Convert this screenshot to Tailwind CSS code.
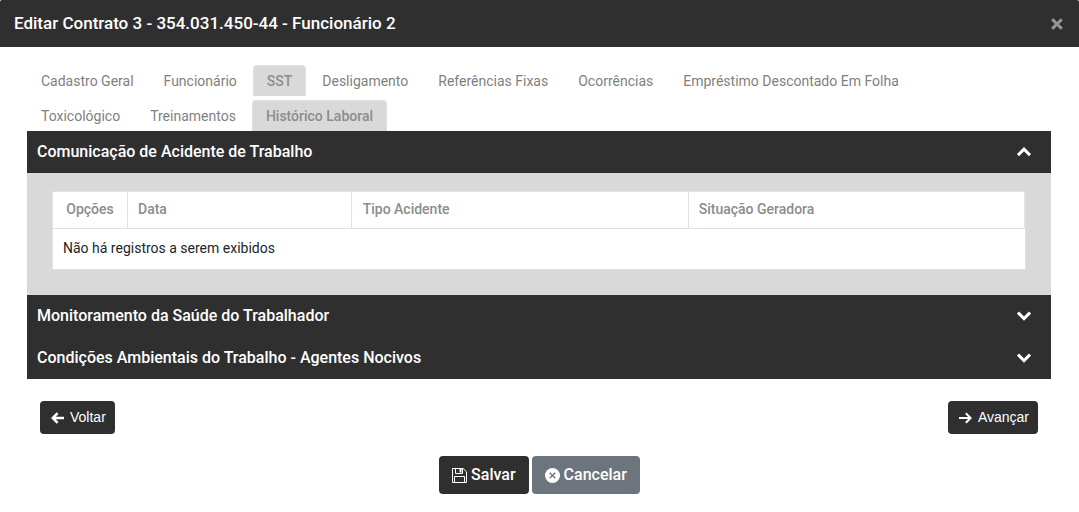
<!DOCTYPE html>
<html lang="pt-BR">
<head>
    <meta charset="UTF-8">
    <meta name="viewport" content="width=device-width, initial-scale=1.0">
    <title>Editar Contrato</title>
    <script src="https://cdn.jsdelivr.net/npm/@tailwindcss/browser@4"></script>
</head>
<body class="bg-white font-[Roboto,sans-serif] text-sm text-[#212529]">

    <!-- Modal header -->
    <header class="flex items-center justify-between rounded-t-[2px] bg-[#2f2f2f] px-[14px] h-[47px]">
        <h1 class="pb-[2px] text-[17px] leading-6 font-medium text-white">Editar Contrato 3 - 354.031.450-44 - Funcionário 2</h1>
        <button type="button" aria-label="Fechar" class="p-[2px] text-[#979797]">
            <svg class="size-3" viewBox="0 0 12 12" fill="none" stroke="currentColor" stroke-width="3"><path d="M1.2 1.2l9.6 9.6M10.8 1.2l-9.6 9.6"/></svg>
        </button>
    </header>

    <main class="pr-7 pt-[18px] pl-[27px]">
        <!-- Tabs -->
        <nav class="flex flex-wrap gap-x-[2px] gap-y-1 pr-10 leading-[30px] text-[#7f7f7f]">
            <a href="#" class="px-[14px] pt-px">Cadastro Geral</a>
            <a href="#" class="px-[14px] pt-px">Funcionário</a>
            <a href="#" class="px-[13px] rounded-t border border-b-0 border-[#dee2e6] bg-[#d9d9d9] font-medium text-[#8c8c8c]">SST</a>
            <a href="#" class="px-[14px] pt-px">Desligamento</a>
            <a href="#" class="px-[14px] pt-px">Referências Fixas</a>
            <a href="#" class="px-[14px] pt-px">Ocorrências</a>
            <a href="#" class="px-[14px] pt-px">Empréstimo Descontado Em Folha</a>
            <a href="#" class="px-[14px] pt-px">Toxicológico</a>
            <a href="#" class="px-[14px] pt-px">Treinamentos</a>
            <a href="#" class="px-[13px] rounded-t border border-b-0 border-[#dee2e6] bg-[#d9d9d9] font-medium text-[#8c8c8c]">Histórico Laboral</a>
        </nav>

        <!-- Accordion -->
        <section>
            <button type="button" aria-expanded="true" class="flex w-full items-center justify-between bg-[#2f2f2f] h-[42px] pl-[10px] pr-5 text-base font-medium text-white">
                Comunicação de Acidente de Trabalho
                <svg class="h-[10px] w-[14px]" viewBox="0 0 14 10" fill="none" stroke="currentColor" stroke-width="3"><path d="M1 8.2l6-6 6 6"/></svg>
            </button>
            <div class="bg-[#d9d9d9] px-[25px] pt-[18px] pb-[25px]">
                <table class="w-full table-fixed border-collapse border border-[#dee2e6] bg-white text-left">
                    <thead>
                        <tr class="h-[37px] border-b border-[#dee2e6] text-[#8c8c8c]">
                            <th class="w-[75px] border-r border-[#dee2e6] text-center font-medium pb-[2px]">Opções</th>
                            <th class="w-[23%] border-r border-[#dee2e6] px-[10px] font-medium pb-[2px]">Data</th>
                            <th class="w-[337px] border-r border-[#dee2e6] px-[11px] font-medium pb-[2px]">Tipo Acidente</th>
                            <th class="border-r-2 border-[#dee2e6] px-[10px] font-medium pb-[2px]">Situação Geradora</th>
                        </tr>
                    </thead>
                    <tbody>
                        <tr class="h-[41px]">
                            <td colspan="4" class="px-[10px] pb-[2px]">Não há registros a serem exibidos</td>
                        </tr>
                    </tbody>
                </table>
            </div>
            <button type="button" aria-expanded="false" class="flex w-full items-center justify-between bg-[#2f2f2f] h-[42px] pl-[10px] pr-5 text-base font-medium text-white">
                Monitoramento da Saúde do Trabalhador
                <svg class="h-[10px] w-[14px]" viewBox="0 0 14 10" fill="none" stroke="currentColor" stroke-width="3"><path d="M1 1.6l6 6 6-6"/></svg>
            </button>
            <button type="button" aria-expanded="false" class="flex w-full items-center justify-between bg-[#2f2f2f] h-[42px] pl-[10px] pr-5 text-base font-medium text-white">
                Condições Ambientais do Trabalho - Agentes Nocivos
                <svg class="h-[10px] w-[14px]" viewBox="0 0 14 10" fill="none" stroke="currentColor" stroke-width="3"><path d="M1 1.6l6 6 6-6"/></svg>
            </button>
        </section>

        <!-- Step navigation -->
        <div class="mt-[22px] flex justify-between px-[13px] font-['Liberation_Sans',sans-serif] text-white">
            <button type="button" class="flex h-[33px] items-center gap-[6px] rounded bg-[#2f2f2f] pl-[11px] pr-[9px] pb-px">
                <svg class="mt-[2px] h-3 w-[13px]" viewBox="0 0 13 12" fill="none" stroke="currentColor" stroke-width="2.5"><path d="M13 6H2.2M6.6 1.2L1.8 6l4.8 4.8"/></svg>
                Voltar
            </button>
            <button type="button" class="flex h-[33px] items-center gap-[6px] rounded bg-[#2f2f2f] pl-[11px] pr-[9px] pb-px">
                <svg class="mt-[2px] h-3 w-[13px]" viewBox="0 0 13 12" fill="none" stroke="currentColor" stroke-width="2"><path d="M0 6h11.2M6.8 1.2L11.6 6l-4.8 4.8"/></svg>
                Avançar
            </button>
        </div>
    </main>

    <!-- Modal actions -->
    <footer class="mt-[22px] flex justify-center gap-[3px] text-base font-medium text-white">
        <button type="button" class="flex h-[38px] items-center gap-1 rounded bg-[#2f2f2f] px-[13px]">
            <svg class="size-[15px]" viewBox="0 0 15 15" fill="none" stroke="currentColor"><path d="M.5.5h10.7l3.3 3.3v10.7H.5z"/><path d="M3.5.5v5h7v-5M2.5 14.5v-6h10v6"/><path d="M8.5 1v3.5" stroke-width="2"/></svg>
            Salvar
        </button>
        <button type="button" class="flex h-[38px] items-center gap-1 rounded bg-[#6c757d] px-[13px]">
            <svg class="size-[15px]" viewBox="0 0 15 15"><circle cx="7.5" cy="7.5" r="7.5" fill="currentColor"/><path d="M4.7 4.7l5.6 5.6M10.3 4.7l-5.6 5.6" stroke="#6c757d" stroke-width="1.3"/></svg>
            Cancelar
        </button>
    </footer>

</body>
</html>
